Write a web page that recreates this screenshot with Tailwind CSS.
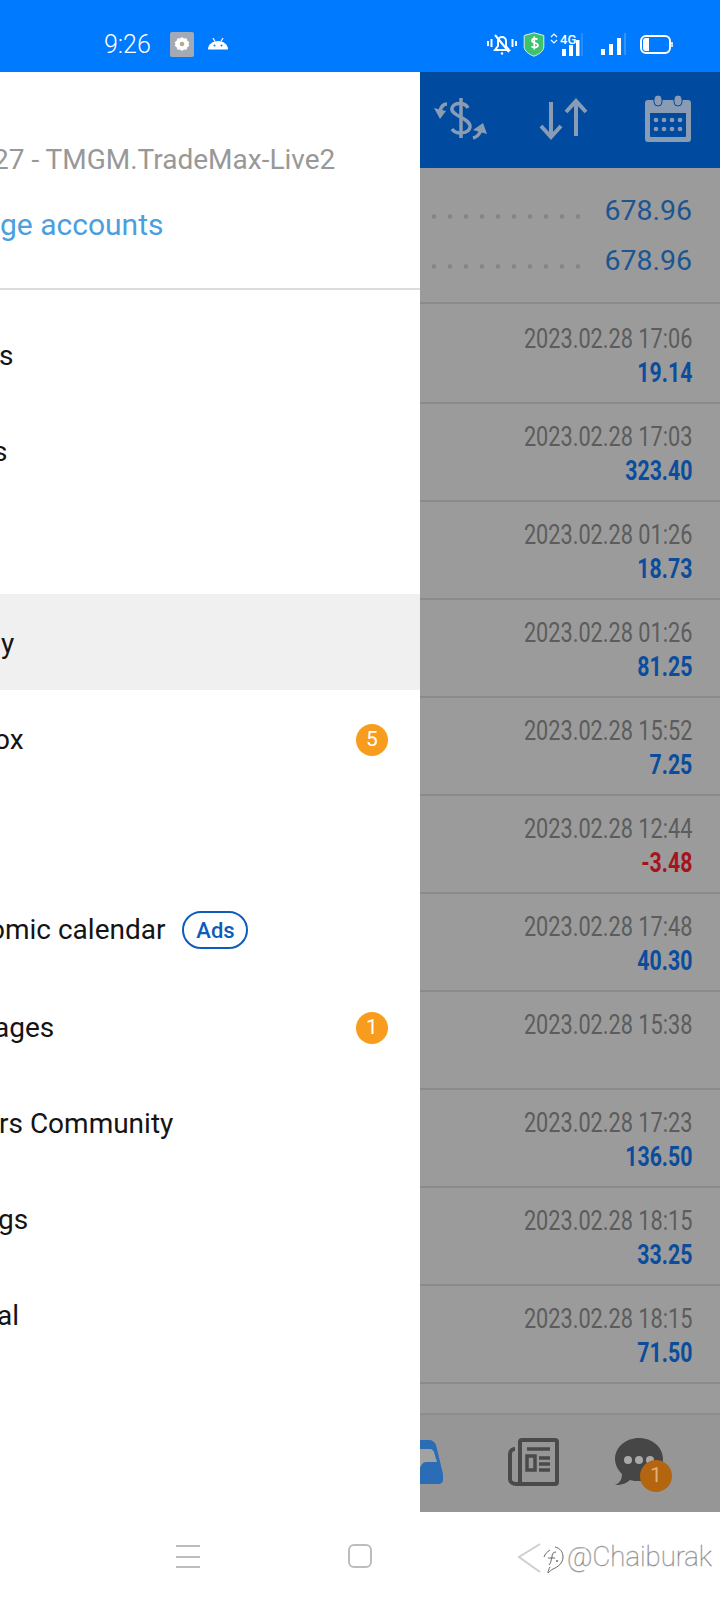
<!DOCTYPE html>
<html><head><meta charset="utf-8">
<script src="https://cdn.jsdelivr.net/npm/@tailwindcss/browser@4"></script>
</head>
<body class="m-0 bg-white">
<div class="w-[720px] h-[1600px] flex flex-col overflow-hidden font-['Roboto',sans-serif]">
  <!-- status bar -->
  <div class="h-[72px] pt-[16px] bg-[#007aff] flex items-center text-white shrink-0">
    <span class="ml-[104px] w-[48px] text-[25px] font-light leading-none">9:26</span>
    <div class="ml-[18px] w-[24px] h-[25px] rounded-[2px] bg-[#a3a9b5] flex items-center justify-center">
      <svg width="16" height="16" viewBox="0 0 16 16"><path d="M8 1l2 1.500 2.500-.2.8 2.400 2 1.500L14.500 8l.8 1.800-2 1.500-.8 2.400-2.500-.2L8 15l-2-1.500-2.500.2-.8-2.400-2-1.500L1.500 8 .7 6.200l2-1.500.8-2.400 2.500.2Z" fill="#fff"/><circle cx="8" cy="8" r="2.300" fill="#b3ab8c"/></svg>
    </div>
    <svg class="ml-[14px]" width="20" height="12" viewBox="0 0 20 12"><path d="M0 11.500C0 6.500 4.500 3 10 3s10 3.500 10 8.500Z" fill="#fff"/><path d="M5 0l2 3.500M15 0l-2 3.500" stroke="#fff" stroke-width="1.200"/><circle cx="6.500" cy="7.500" r="1" fill="#007aff"/><circle cx="13.500" cy="7.500" r="1" fill="#007aff"/></svg>
    <svg class="ml-auto" width="32" height="24" viewBox="0 0 32 24" fill="none" stroke="#fff" stroke-width="2"><path d="M9 18h14l-3-4V9a4 4 0 0 0-8 0v5Z"/><path d="M9 3l14 17"/><circle cx="16" cy="21.500" r="1.200" fill="#fff" stroke="none"/><path d="M2 9v5M5.500 7v8M26.500 7v8M30 9v5"/></svg>
    <svg class="ml-[5px]" width="22" height="25" viewBox="0 0 21 25"><path d="M10.500 .8L20.300 3.500v11.500c0 4-5 7.500-9.800 9.200C5.700 22.500 .7 19 .7 15V3.500Z" fill="#3ec26d" stroke="#d8f2e2" stroke-width="1"/><path d="M14 7.500c-1-1.200-5.500-1.500-5.500 1.200 0 3 6 1.500 6 4.600 0 2.700-5 2.500-6.500 1M10.800 4.500v13" fill="none" stroke="#fff" stroke-width="1.700"/></svg>
    <div class="relative ml-[5px] w-[33px] h-[24px]">
      <span class="absolute left-[10px] top-[1px] text-[13px] font-medium leading-[14px]">4G</span>
      <svg class="absolute left-0 top-0" width="33" height="24" viewBox="0 0 33 24"><path d="M1 5l3-3 3 3M1 8l3 3 3-3" fill="none" stroke="#fff" stroke-width="1.200"/><rect x="12" y="17" width="4" height="7" fill="#fff"/><rect x="19" y="13" width="4" height="11" fill="#fff"/><rect x="26" y="8" width="3.500" height="16" fill="#fff"/><rect x="31" y="1" width="2" height="23" fill="#fff" opacity=".15"/></svg>
    </div>
    <svg class="ml-[17px]" width="26" height="24" viewBox="0 0 26 24"><rect x="1" y="17" width="4" height="6" fill="#fff"/><rect x="9" y="12" width="4" height="11" fill="#fff"/><rect x="17" y="6" width="4" height="17" fill="#fff"/><rect x="24" y="1" width="2" height="22" fill="#fff" opacity=".2"/></svg>
    <svg class="ml-[14px] mr-[47px]" width="33" height="21" viewBox="0 0 33 21"><rect x="1" y="2" width="29" height="17" rx="5" fill="none" stroke="#fff" stroke-width="2"/><path d="M3 7a3 3 0 0 1 3-3h3v13H6a3 3 0 0 1-3-3Z" fill="#fff"/><path d="M32 8v5" stroke="#fff" stroke-width="1.500"/></svg>
  </div>

  <!-- body -->
  <div class="h-[1440px] flex shrink-0">
    <!-- drawer -->
    <aside class="w-[420px] bg-white overflow-hidden flex flex-col">
      <div class="h-[218px] border-b-2 border-[#dcdcdc] shrink-0 flex flex-col">
        <div class="mt-[71px] ml-[-7px] text-[28px] leading-[34px] text-[#989898] whitespace-nowrap">27 - TMGM.TradeMax-Live2</div>
        <div class="mt-[31px] text-[30px] leading-[34px] text-[#4b9fe1] whitespace-nowrap">ge accounts</div>
      </div>
      <nav class="pt-[16px] text-[28px] text-[#141414] flex flex-col">
        <div class="h-[96px] pt-[4px] flex items-center"><span class="ml-[-1px]">s</span></div>
        <div class="h-[96px] pt-[4px] flex items-center"><span class="ml-[-7px]">s</span></div>
        <div class="h-[96px] flex items-center"></div>
        <div class="h-[96px] pt-[4px] flex items-center bg-[#f0f0f0]"><span class="ml-[1px]">y</span></div>
        <div class="h-[96px] pt-[4px] flex items-center justify-between pr-[32px]"><span class="ml-[-6px]">ox</span><span class="w-[32px] h-[32px] rounded-full bg-[#f89c1e] text-white text-[21px] flex items-center justify-center">5</span></div>
        <div class="h-[96px] flex items-center"></div>
        <div class="h-[96px] flex items-center"><span class="ml-[-11px]">omic calendar</span><span class="ml-[17px] w-[66px] h-[38px] rounded-full border-2 border-[#0d5cbb] text-[#0d5cbb] text-[22px] font-medium flex items-center justify-center">Ads</span></div>
        <div class="h-[96px] pt-[4px] flex items-center justify-between pr-[32px]"><span class="ml-[-6px]">ages</span><span class="w-[32px] h-[32px] rounded-full bg-[#f89c1e] text-white text-[21px] flex items-center justify-center">1</span></div>
        <div class="h-[96px] pt-[4px] flex items-center"><span class="ml-[-1px]">rs Community</span></div>
        <div class="h-[96px] pt-[4px] flex items-center"><span class="ml-[-2px]">gs</span></div>
        <div class="h-[96px] pt-[4px] flex items-center"><span class="ml-[-3px]">al</span></div>
      </nav>
    </aside>

    <!-- dimmed main -->
    <main class="w-[300px] bg-[#9b9b9b] flex flex-col overflow-hidden">
      <div class="h-[96px] bg-[#004a9f] relative shrink-0">
        <svg class="absolute left-[13px] top-[26px]" width="54" height="42" viewBox="0 0 54 42" fill="none" stroke="#8a9cb4" stroke-width="3.500"><path d="M28 0v40"/><path d="M35 10C32 4 21 4 19 10 17 18 38 20 37 29 36 36 23 37 19 31"/><path d="M14 6C10 6 8 9 7 13"/><path d="M1 10l12 3-6 8Z" fill="#8a9cb4" stroke="none"/><path d="M40 40c4-1 7-4 8-9"/><path d="M50 25l4 11-14-4Z" fill="#8a9cb4" stroke="none"/></svg>
        <svg class="absolute left-[119px] top-[26px]" width="50" height="42" viewBox="0 0 50 42" fill="none" stroke="#8a9cb4" stroke-width="4"><path d="M12 4v36M2 28l10 11 10-11"/><path d="M37 38V2M27 14L37 3l10 11"/></svg>
        <svg class="absolute left-[225px] top-[23px]" width="46" height="47" viewBox="0 0 46 47"><path d="M3 5h40a3 3 0 0 1 3 3v36a3 3 0 0 1-3 3H3a3 3 0 0 1-3-3V8a3 3 0 0 1 3-3Zm2 13v23a1 1 0 0 0 1 1h34a1 1 0 0 0 1-1V18Z" fill="#8a9cb4" fill-rule="evenodd"/><rect x="9" y="0" width="8" height="11" rx="4" fill="#8a9cb4" stroke="#004a9f" stroke-width="1"/><rect x="29" y="0" width="8" height="11" rx="4" fill="#8a9cb4" stroke="#004a9f" stroke-width="1"/><g fill="#8a9cb4"><circle cx="11" cy="25" r="2.300"/><circle cx="19" cy="25" r="2.300"/><circle cx="27" cy="25" r="2.300"/><circle cx="35" cy="25" r="2.300"/><circle cx="11" cy="34" r="2.300"/><circle cx="19" cy="34" r="2.300"/><circle cx="27" cy="34" r="2.300"/><circle cx="35" cy="34" r="2.300"/></g></svg>
      </div>
      <div class="h-[136px] border-b-2 border-[#8a8a8a] shrink-0 flex flex-col pt-[28px] pr-[28px] gap-[20px]">
        <div class="flex items-center justify-end h-[30px]"><svg class="mr-[24px] mt-[10px]" width="148" height="5" viewBox="0 0 148 5" fill="#858585"><circle cx="2" cy="2.500" r="2.300"/><circle cx="18" cy="2.500" r="2.300"/><circle cx="34" cy="2.500" r="2.300"/><circle cx="50" cy="2.500" r="2.300"/><circle cx="66" cy="2.500" r="2.300"/><circle cx="82" cy="2.500" r="2.300"/><circle cx="98" cy="2.500" r="2.300"/><circle cx="114" cy="2.500" r="2.300"/><circle cx="130" cy="2.500" r="2.300"/><circle cx="146" cy="2.500" r="2.300"/></svg><span class="text-[28.500px] leading-none text-[#1c5590]">678.96</span></div>
        <div class="flex items-center justify-end h-[30px]"><svg class="mr-[24px] mt-[10px]" width="148" height="5" viewBox="0 0 148 5" fill="#858585"><circle cx="2" cy="2.500" r="2.300"/><circle cx="18" cy="2.500" r="2.300"/><circle cx="34" cy="2.500" r="2.300"/><circle cx="50" cy="2.500" r="2.300"/><circle cx="66" cy="2.500" r="2.300"/><circle cx="82" cy="2.500" r="2.300"/><circle cx="98" cy="2.500" r="2.300"/><circle cx="114" cy="2.500" r="2.300"/><circle cx="130" cy="2.500" r="2.300"/><circle cx="146" cy="2.500" r="2.300"/></svg><span class="text-[28.500px] leading-none text-[#1c5590]">678.96</span></div>
      </div>
      <section class="flex flex-col">
        <div class="h-[100px] border-b-2 border-[#8a8a8a] flex flex-col items-end pr-[28px] pt-[19px] shrink-0"><span class="text-[28px] leading-[32px] text-[#5c5c5c] scale-x-[.775] origin-right">2023.02.28 17:06</span><span class="text-[28px] leading-[32px] font-bold text-[#0b4c9c] scale-x-[.76] origin-right mt-[2px]">19.14</span></div>
        <div class="h-[98px] border-b-2 border-[#8a8a8a] flex flex-col items-end pr-[28px] pt-[17px] shrink-0"><span class="text-[28px] leading-[32px] text-[#5c5c5c] scale-x-[.775] origin-right">2023.02.28 17:03</span><span class="text-[28px] leading-[32px] font-bold text-[#0b4c9c] scale-x-[.76] origin-right mt-[2px]">323.40</span></div>
        <div class="h-[98px] border-b-2 border-[#8a8a8a] flex flex-col items-end pr-[28px] pt-[17px] shrink-0"><span class="text-[28px] leading-[32px] text-[#5c5c5c] scale-x-[.775] origin-right">2023.02.28 01:26</span><span class="text-[28px] leading-[32px] font-bold text-[#0b4c9c] scale-x-[.76] origin-right mt-[2px]">18.73</span></div>
        <div class="h-[98px] border-b-2 border-[#8a8a8a] flex flex-col items-end pr-[28px] pt-[17px] shrink-0"><span class="text-[28px] leading-[32px] text-[#5c5c5c] scale-x-[.775] origin-right">2023.02.28 01:26</span><span class="text-[28px] leading-[32px] font-bold text-[#0b4c9c] scale-x-[.76] origin-right mt-[2px]">81.25</span></div>
        <div class="h-[98px] border-b-2 border-[#8a8a8a] flex flex-col items-end pr-[28px] pt-[17px] shrink-0"><span class="text-[28px] leading-[32px] text-[#5c5c5c] scale-x-[.775] origin-right">2023.02.28 15:52</span><span class="text-[28px] leading-[32px] font-bold text-[#0b4c9c] scale-x-[.76] origin-right mt-[2px]">7.25</span></div>
        <div class="h-[98px] border-b-2 border-[#8a8a8a] flex flex-col items-end pr-[28px] pt-[17px] shrink-0"><span class="text-[28px] leading-[32px] text-[#5c5c5c] scale-x-[.775] origin-right">2023.02.28 12:44</span><span class="text-[28px] leading-[32px] font-bold text-[#a5141c] scale-x-[.76] origin-right mt-[2px]">-3.48</span></div>
        <div class="h-[98px] border-b-2 border-[#8a8a8a] flex flex-col items-end pr-[28px] pt-[17px] shrink-0"><span class="text-[28px] leading-[32px] text-[#5c5c5c] scale-x-[.775] origin-right">2023.02.28 17:48</span><span class="text-[28px] leading-[32px] font-bold text-[#0b4c9c] scale-x-[.76] origin-right mt-[2px]">40.30</span></div>
        <div class="h-[98px] border-b-2 border-[#8a8a8a] flex flex-col items-end pr-[28px] pt-[17px] shrink-0"><span class="text-[28px] leading-[32px] text-[#5c5c5c] scale-x-[.775] origin-right">2023.02.28 15:38</span></div>
        <div class="h-[98px] border-b-2 border-[#8a8a8a] flex flex-col items-end pr-[28px] pt-[17px] shrink-0"><span class="text-[28px] leading-[32px] text-[#5c5c5c] scale-x-[.775] origin-right">2023.02.28 17:23</span><span class="text-[28px] leading-[32px] font-bold text-[#0b4c9c] scale-x-[.76] origin-right mt-[2px]">136.50</span></div>
        <div class="h-[98px] border-b-2 border-[#8a8a8a] flex flex-col items-end pr-[28px] pt-[17px] shrink-0"><span class="text-[28px] leading-[32px] text-[#5c5c5c] scale-x-[.775] origin-right">2023.02.28 18:15</span><span class="text-[28px] leading-[32px] font-bold text-[#0b4c9c] scale-x-[.76] origin-right mt-[2px]">33.25</span></div>
        <div class="h-[98px] border-b-2 border-[#8a8a8a] flex flex-col items-end pr-[28px] pt-[17px] shrink-0"><span class="text-[28px] leading-[32px] text-[#5c5c5c] scale-x-[.775] origin-right">2023.02.28 18:15</span><span class="text-[28px] leading-[32px] font-bold text-[#0b4c9c] scale-x-[.76] origin-right mt-[2px]">71.50</span></div>
        <div class="h-[31px] border-b-2 border-[#8d8d8d] shrink-0"></div>
      </section>
      <div class="flex-1 bg-[#969696] relative">
        <svg class="absolute left-0 top-[25px]" width="24" height="44" viewBox="0 0 24 44"><path d="M0 0h9c3 0 6 2 7 5l7 29v6c0 2-2 4-4 4H0Z" fill="#2a6cb5"/><path d="M0 9h10c2 0 3 1 4 3l3 10H6c-3 0-5 3-6 6Z" fill="#a2a2a2"/></svg>
        <svg class="absolute left-[88px] top-[23px]" width="51" height="48" viewBox="0 0 51 48" fill="none" stroke="#4a4a4a" stroke-width="4"><path d="M12 46V4a2 2 0 0 1 2-2h33a2 2 0 0 1 2 2v40a2 2 0 0 1-2 2H8c-3 0-6-2-6-5V16c0-3 2-5 5-5"/><path d="M19 11h23" stroke-width="3.500"/><rect x="19" y="18" width="8" height="14" stroke-width="3.500"/><path d="M31 20h11M31 26h11M31 32h11" stroke-width="3.500"/></svg>
        <svg class="absolute left-[195px] top-[23px]" width="48" height="48" viewBox="0 0 48 48"><path d="M24 0C11 0 0 9 0 21c0 6 3 11 7 15 0 5-2 9-7 11 7 0 12-2 15-5 3 1 6 1 9 1 13 0 24-10 24-22S37 0 24 0Z" fill="#464646"/><circle cx="13" cy="22" r="4" fill="#a8a8a8"/><circle cx="24" cy="22" r="4" fill="#a8a8a8"/><circle cx="35" cy="22" r="4" fill="#a8a8a8"/></svg>
        <span class="absolute left-[220px] top-[45px] w-[32px] h-[32px] rounded-full bg-[#b4650f] text-[#e0b078] text-[21px] flex items-center justify-center">1</span>
      </div>
    </main>
  </div>

  <!-- android nav -->
  <div class="flex-1 bg-white relative">
    <div class="absolute left-[176px] top-[33px] w-[24px] h-[23px] flex flex-col justify-between">
      <div class="h-[2px] bg-[#bdbdbd]"></div><div class="h-[2px] bg-[#bdbdbd]"></div><div class="h-[2px] bg-[#bdbdbd]"></div>
    </div>
    <div class="absolute left-[348px] top-[32px] w-[24px] h-[24px] rounded-[6px] border-2 border-[#bdbdbd]"></div>
    <svg class="absolute left-[516px] top-[30px]" width="28" height="32" viewBox="0 0 28 32" fill="none" stroke="#cfcfcf" stroke-width="2"><path d="M24 2L3 15l21 15"/></svg>
    <svg class="absolute left-[541px] top-[34px]" width="24" height="28" viewBox="0 0 24 28" fill="none" stroke="#666" stroke-width="1"><path d="M14 1c5 1 8 5 8 10 0 6-5 10-10 12-2 1-3 2-5 4"/><path d="M7 27c0-2 1-4 2-6"/><path d="M9 4C6 6 4 8 3 11"/><path d="M15 6c-3 0-4 2-4 5-1 3-1 6-3 8M7 12h7"/><circle cx="16" cy="15" r="1" fill="#666" stroke="none"/></svg>
    <span class="absolute left-[567px] top-[27px] text-[27.500px] leading-[36px] font-thin whitespace-nowrap text-white [-webkit-text-stroke:0.5px_#888]">@Chaiburak</span>
  </div>
</div>
</body></html>
